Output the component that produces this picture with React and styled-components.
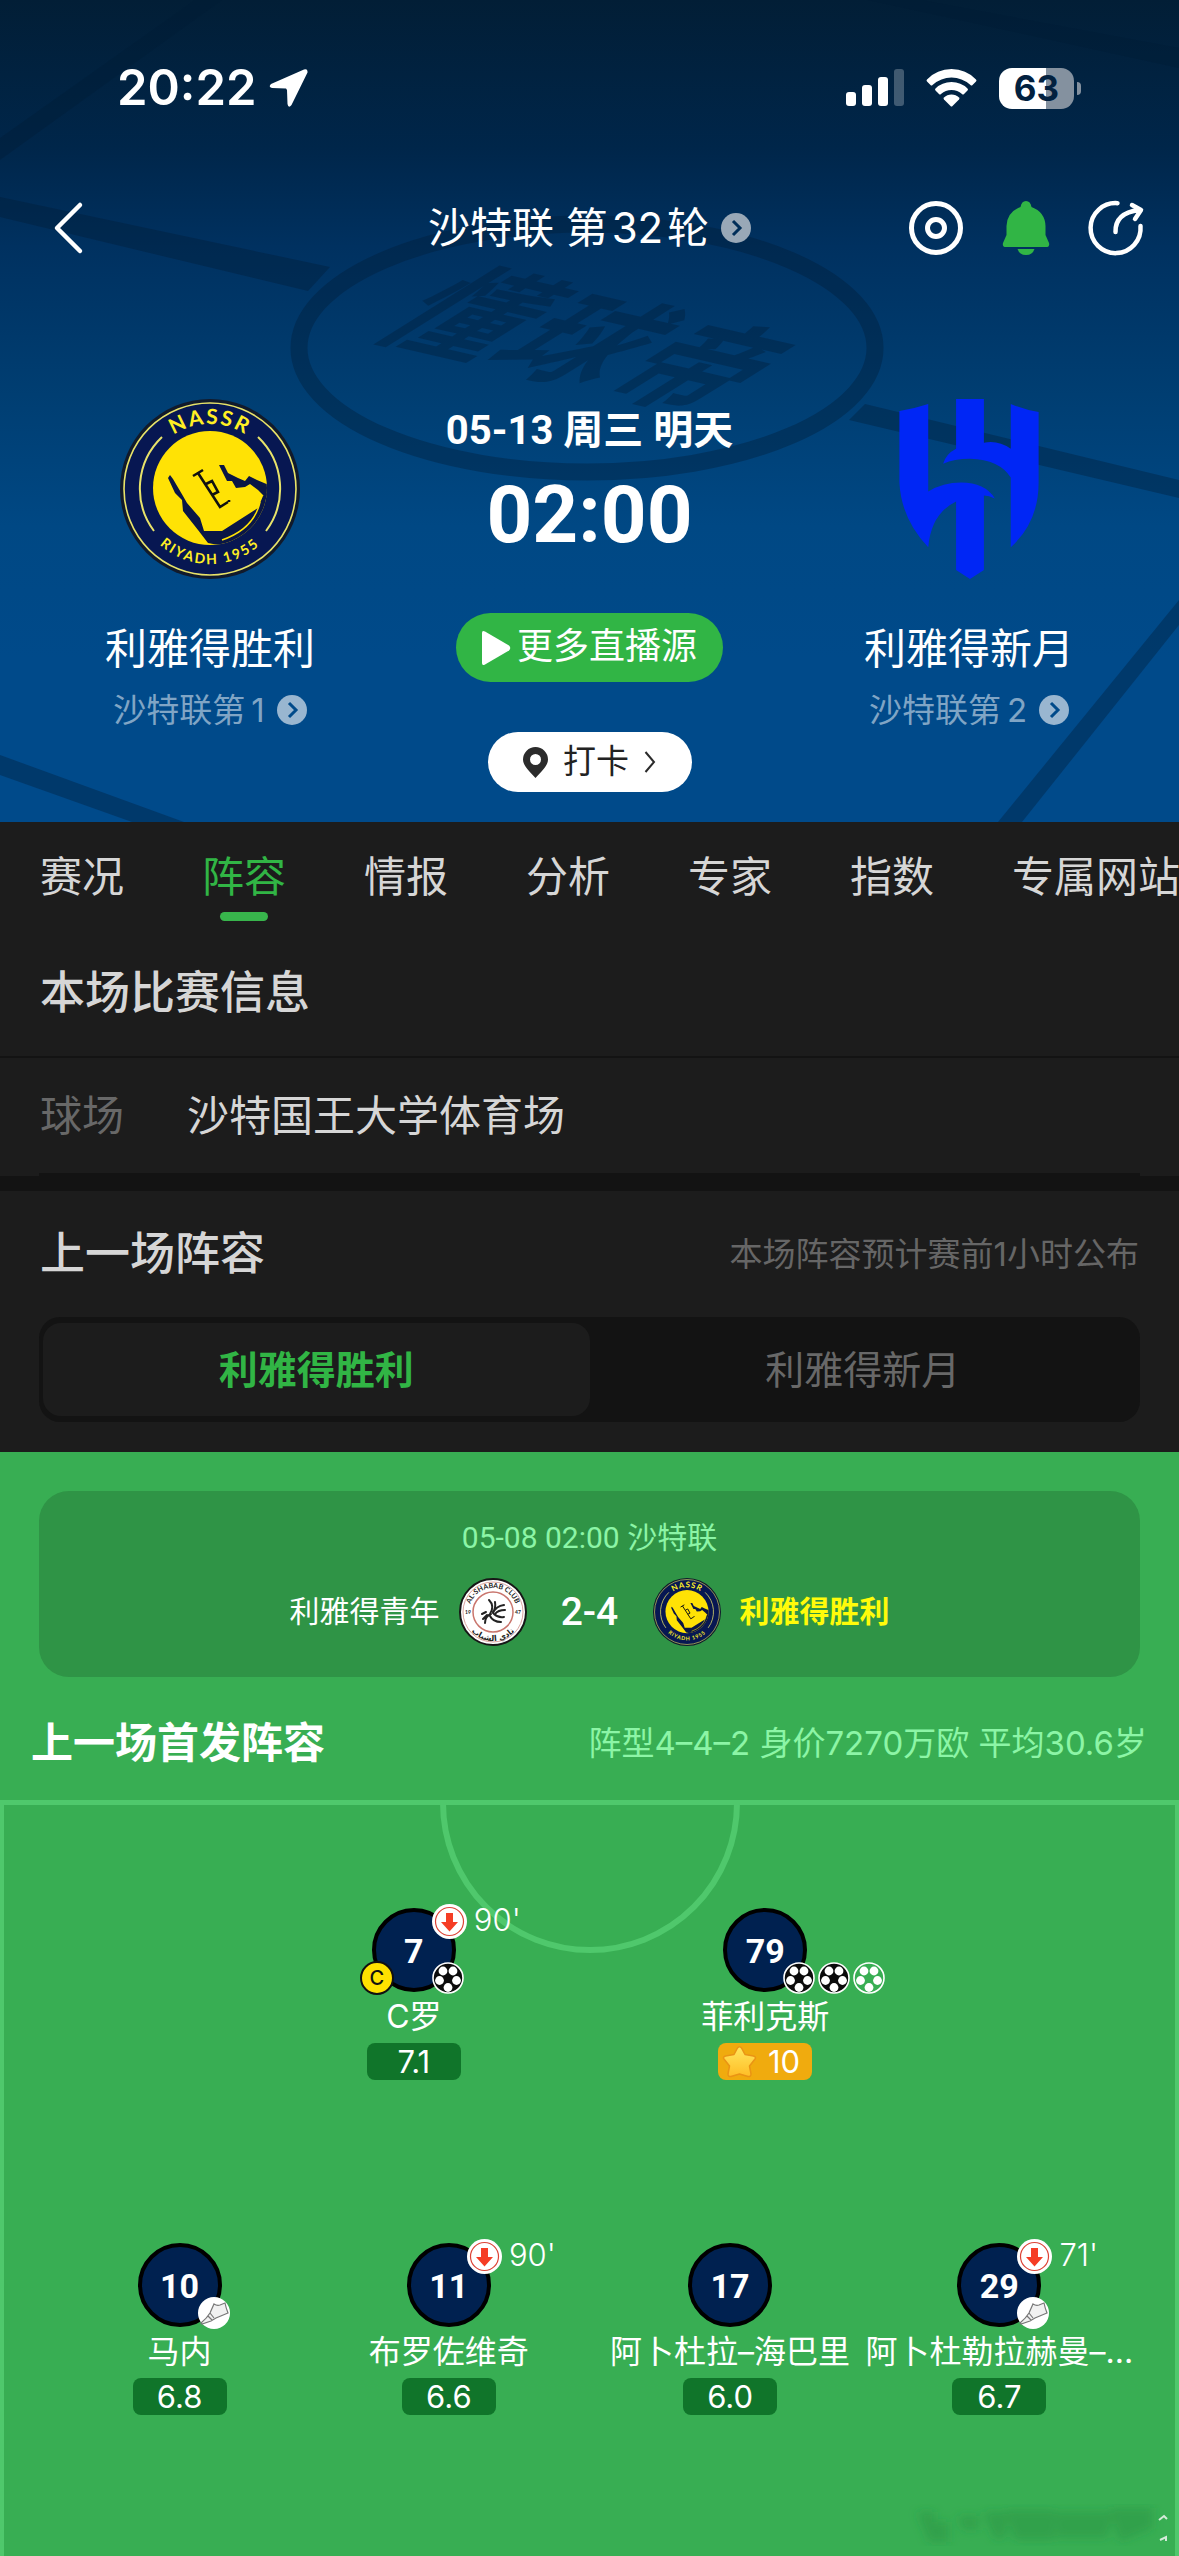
import React, { useState } from "react";
import styled, { createGlobalStyle } from "styled-components";

const GlobalStyle = createGlobalStyle`
  * {
    box-sizing: border-box;
  }
  body {
    margin: 0;
    background: #1c1c1c;
    font-family: Inter, "Noto Sans CJK SC", sans-serif;
  }
  button {
    border: 0;
    padding: 0;
    background: none;
    color: inherit;
    font: inherit;
  }
  a {
    color: inherit;
    text-decoration: none;
  }
  h1, h2, p {
    margin: 0;
    font-weight: 400;
  }
  svg {
    display: block;
    flex: none;
  }
`;

const Page = styled.div`
  display: flex;
  flex-direction: column;
  min-height: 100vh;
  overflow: hidden;
`;

/* ---------- header ---------- */

const Header = styled.header`
  position: relative;
  color: #fff;
  background: linear-gradient(#021e36 0%, #00264a 18%, #003160 30%, #003e72 48%, #004884 64%, #004a8a 80%);
`;

const Backdrop = styled.svg`
  position: absolute;
  inset: 0;
  width: 100%;
  height: 100%;
`;

const HeaderBody = styled.div`
  position: relative;
  padding-bottom: 30px;
`;

const StatusBar = styled.div`
  display: flex;
  align-items: center;
  justify-content: space-between;
  padding: 58px 105px 0 117px;
  height: 118px;
`;

const StatusGroup = styled.div`
  display: flex;
  align-items: center;
  gap: ${(p) => p.$gap}px;
`;

const Clock = styled.span`
  font-size: 49px;
  font-weight: 600;
  line-height: 60px;
`;

const Battery = styled.span`
  position: relative;
  width: 75px;
  border-radius: 13px;
  background: linear-gradient(90deg, #fff 63%, #84919f 63%);
  color: #02213f;
  font-size: 35px;
  font-weight: 700;
  line-height: 41px;
  text-align: center;

  &::after {
    content: "";
    position: absolute;
    right: -7px;
    top: 14px;
    width: 4px;
    height: 13px;
    border-radius: 0 6px 6px 0;
    background: #84919f;
  }
`;

const NavBar = styled.nav`
  display: grid;
  grid-template-columns: 1fr auto 1fr;
  align-items: center;
  height: 110px;
  margin-top: 55px;
  padding: 0 33px;
`;

const BackButton = styled.button`
  justify-self: start;
  padding-left: 19px;
`;

const League = styled.a`
  display: flex;
  align-items: center;
  gap: 12px;
  font-size: 42px;
  line-height: 60px;
`;

const NavActions = styled.div`
  display: flex;
  justify-content: flex-end;
  gap: 30px;
`;

const Match = styled.div`
  display: grid;
  grid-template-columns: 420fr 339fr 420fr;
  padding-top: 116px;
`;

const Team = styled.div`
  display: flex;
  flex-direction: column;
  align-items: center;
`;

const TeamName = styled.h2`
  margin-top: 40px;
  font-size: 42px;
  line-height: 60px;
`;

const Rank = styled.a`
  display: flex;
  align-items: center;
  gap: 12px;
  margin-top: 7px;
  font-size: 33px;
  line-height: 48px;
  color: #80a5c5;
`;

const Kickoff = styled.div`
  display: flex;
  flex-direction: column;
  align-items: center;
  font-family: Roboto, "Noto Sans CJK SC", sans-serif;
  white-space: nowrap;
`;

const KickoffDate = styled.p`
  padding-top: 2px;
  font-size: 40px;
  font-weight: 700;
  line-height: 60px;
`;

const KickoffTime = styled.p`
  margin-top: 9px;
  font-size: 80px;
  font-weight: 700;
  line-height: 90px;
`;

const LiveButton = styled.button`
  display: flex;
  align-items: center;
  justify-content: center;
  gap: 6px;
  width: 267px;
  margin-top: 53px;
  border-radius: 35px;
  background: #31b545;
  font-size: 36px;
  line-height: 69px;
`;

const CheckInButton = styled.button`
  display: flex;
  align-items: center;
  justify-content: center;
  gap: 15px;
  width: 204px;
  margin-top: 50px;
  border-radius: 30px;
  background: #fff;
  color: #222;
  font-size: 33px;
  line-height: 60px;
`;

/* ---------- dark area ---------- */

const Tabs = styled.nav`
  display: flex;
  gap: 78px;
  padding: 25px 0 0 40px;
  overflow: hidden;
`;

const Tab = styled.button`
  display: flex;
  flex: none;
  flex-direction: column;
  align-items: center;
  font-size: 42px;
  line-height: 60px;
  color: ${(p) => (p.$active ? "#31b545" : "#d6d6d6")};

  &::after {
    content: "";
    width: 48px;
    height: 9px;
    margin-top: 5px;
    border-radius: 5px;
    background: ${(p) => (p.$active ? "#38b54c" : "transparent")};
  }
`;

const SectionTitle = styled.h2`
  font-size: 45px;
  font-weight: 500;
  line-height: 60px;
  color: #d6d6d6;
`;

const InfoHead = styled.div`
  padding: 42px 40px 33px;
  border-bottom: 2px solid #131313;
`;

const InfoRow = styled.div`
  display: flex;
  gap: 63px;
  margin: 0 39px;
  padding: 28px 1px 27px;
  border-bottom: 3px solid #131313;
  font-size: 42px;
  line-height: 60px;
  color: #d6d6d6;
`;

const InfoLabel = styled.span`
  color: #686868;
`;

const Band = styled.div`
  height: 15px;
  background: #131313;
`;

const SquadHead = styled.div`
  display: flex;
  align-items: center;
  justify-content: space-between;
  padding: 33px 40px 33px;
`;

const Hint = styled.p`
  font-size: 33px;
  line-height: 48px;
  color: #666;
`;

const Segment = styled.div`
  display: grid;
  grid-template-columns: 1fr 1fr;
  margin: 0 39px 30px;
  padding: 6px 4px;
  border-radius: 21px;
  background: #131313;
`;

const SegmentButton = styled.button`
  border-radius: 18px;
  font-size: 39px;
  font-weight: ${(p) => (p.$active ? 700 : 400)};
  line-height: 93px;
  background: ${(p) => (p.$active ? "#1c1c1c" : "transparent")};
  color: ${(p) => (p.$active ? "#31b545" : "#686868")};
`;

/* ---------- green area ---------- */

const Lineup = styled.section`
  display: flex;
  flex: 1;
  flex-direction: column;
  padding-top: 39px;
  background: #38ae53;
  color: #fff;
`;

const ResultCard = styled.div`
  margin: 0 39px;
  padding: 27px 0 31px;
  border-radius: 30px;
  background: #2f9446;
  font-family: Roboto, "Noto Sans CJK SC", sans-serif;
  font-size: 30px;
  line-height: 40px;
`;

const ResultDate = styled.p`
  text-align: center;
  color: #8cf5a6;
`;

const ResultRow = styled.div`
  display: grid;
  grid-template-columns: 1fr 126px 1fr;
  align-items: center;
  margin-top: 20px;
`;

const ResultTeam = styled.span`
  display: flex;
  align-items: center;
  justify-content: ${(p) => (p.$home ? "flex-end" : "flex-start")};
  gap: 19px;
  font-weight: ${(p) => (p.$home ? 400 : 700)};
  color: ${(p) => (p.$home ? "#fff" : "#fffb0a")};
`;

const Score = styled.strong`
  font-size: 39px;
  font-weight: 500;
  text-align: center;
`;

const LineupHead = styled.div`
  display: flex;
  align-items: center;
  justify-content: space-between;
  padding: 36px 32px 27px 31px;
`;

const LineupTitle = styled.h2`
  font-size: 42px;
  font-weight: 700;
  line-height: 60px;
`;

const LineupMeta = styled.p`
  font-size: 33px;
  line-height: 48px;
  color: #8cf5a6;
`;

const Field = styled.div`
  position: relative;
  display: flex;
  flex: 1;
  flex-direction: column;
  gap: 163px;
  padding: 103px 0 90px;
  border: 4px solid #4fc86c;
  border-top-width: 5px;
  border-bottom: 0;
`;

const CentreArc = styled.svg`
  position: absolute;
  top: -2px;
  left: 50%;
  margin-left: -150px;
`;

const Smudge = styled.svg`
  position: absolute;
  right: 0;
  bottom: 0;
`;

const PlayerBox = styled.div`
  display: flex;
  flex: 1;
  flex-direction: column;
  align-items: center;
  min-width: 0;
`;

const FieldRow = styled.div`
  position: relative;
  display: flex;
  padding: 0 ${(p) => (p.$count === 2 ? "20%" : "41px")};

  ${PlayerBox}:nth-child(3) {
    margin-left: 12px;
  }
`;

const Shirt = styled.div`
  position: relative;
  width: 84px;
  height: 84px;
  border: 4px solid #000;
  border-radius: 50%;
  background: #002150;
  font-family: Roboto, sans-serif;
  font-size: 34px;
  font-weight: 700;
  line-height: 78px;
  text-align: center;
`;

const SubOff = styled.span`
  position: absolute;
  left: 56px;
  top: -8px;
  display: flex;
  gap: 7px;
  font-family: Inter, sans-serif;
  font-size: 31px;
  font-weight: 300;
  line-height: 32px;
`;

const Events = styled.span`
  position: absolute;
  left: 56px;
  top: 50px;
  display: flex;
  gap: 3px;
`;

const Captain = styled.span`
  position: absolute;
  left: -16px;
  top: 49px;
  width: 34px;
  height: 34px;
  border: 2px solid #111;
  border-radius: 50%;
  background: #ffe100;
  color: #111;
  font-family: Inter, sans-serif;
  font-size: 20px;
  font-weight: 500;
  line-height: 30px;
`;

const PlayerName = styled.span`
  margin-top: 3px;
  font-size: 32px;
  line-height: 44px;
  white-space: nowrap;
`;

const Rating = styled.span`
  display: flex;
  align-items: center;
  justify-content: ${(p) => (p.$best ? "space-between" : "center")};
  width: 94px;
  margin-top: 4px;
  padding: ${(p) => (p.$best ? "0 12px 0 4px" : "0")};
  border-radius: 8px;
  background: ${(p) => (p.$best ? "#f0ab0e" : "#10752a")};
  font-size: 31px;
  line-height: 37px;
`;

/* ---------- drawings ---------- */

function PitchBackdrop() {
  return (
    <Backdrop viewBox="0 0 1179 822" preserveAspectRatio="xMidYMid slice" aria-hidden="true">
      <g fill="#001c36" fillOpacity="0.36">
        <path d="M195 0h27L0 160v-22z" />
        <path d="M0 197l330 70-22 24L0 217z" />
        <path d="M868 0h53l258 48v20z" />
        <path d="M865 404l314 76v18L849 420z" />
        <path d="M1179 600v25L1022 822h-24z" />
        <path d="M0 755l184 67h-52L0 775z" />
        <text
          x="0 117 234"
          fontSize="112"
          fontWeight="700"
          fontFamily='"Noto Sans CJK SC", sans-serif'
          transform="translate(368 333) rotate(13) skewX(-45)"
        >
          懂球帝
        </text>
      </g>
      <ellipse cx="587" cy="348" rx="288" ry="124" fill="none" stroke="#001c36" strokeOpacity="0.36" strokeWidth="17" />
    </Backdrop>
  );
}

function MoreDot({ color, arrow }) {
  return (
    <svg width="30" height="30" viewBox="0 0 30 30">
      <circle cx="15" cy="15" r="15" fill={color} />
      <path d="M12 8l7 7-7 7" fill="none" stroke={arrow} strokeWidth="3" />
    </svg>
  );
}

function NassrCrest({ size }) {
  return (
    <svg width={size} height={size} viewBox="0 0 180 180">
      <defs>
        <path id="nassrTop" d="M25 90a65 65 0 0 1 130 0" />
        <path id="nassrBottom" d="M15 90a75 75 0 0 0 150 0" />
        <clipPath id="nassrDisc">
          <circle cx="90" cy="89" r="57" />
        </clipPath>
      </defs>
      <circle cx="90" cy="90" r="90" fill="#111a2b" />
      <circle cx="90" cy="90" r="86" fill="#071752" stroke="#e8e36a" strokeWidth="1.6" />
      <path d="M42 38A71 71 0 0 0 34 132M138 38a71 71 0 0 1 8 94" fill="none" stroke="#e8e36a" strokeWidth="2" />
      <circle cx="90" cy="89" r="57" fill="#ffe205" />
      <g clipPath="url(#nassrDisc)" fill="#0a1645">
        <path d="M50 76l3 4 10 17 4 7 13 15 4 13 18 0 36-23 5-12 8-6v30l-25 22q-16 6-38 1l-10-13-15-19-1-11-7-7-7-15z" />
        <path d="M99 66h5l4 8 10 5 7 3 4-5 8 4 12 5v12l-5-1-6-6-8-6-5 3-9 1-4-7h-5l-5-10z" />
        <path d="M140 103q-6 27-38 38" fill="none" stroke="#ffe205" strokeWidth="1.5" />
      </g>
      <path d="M73 77l10-6M78 74l22 34 8-5M86 85l6-3 6 11-6 3M109 101v2" fill="none" stroke="#111" strokeWidth="2.6" />
      <g fill="#ffef24" fontFamily="Lato, sans-serif" textAnchor="middle">
        <text fontSize="21" fontWeight="700" letterSpacing="2">
          <textPath href="#nassrTop" startOffset="50%">NASSR</textPath>
        </text>
        <text fontSize="14" fontWeight="700" letterSpacing="2">
          <textPath href="#nassrBottom" startOffset="50%">RIYADH 1955</textPath>
        </text>
      </g>
    </svg>
  );
}

function HilalCrest() {
  return (
    <svg width="140" height="180" viewBox="0 0 140 181" fill="#0026f5">
      <path d="M0 12Q14 10 29 5v88Q44 84 62 84q24 0 34 16-6-3-11-3v75l-14 9-14-9v-69q-25 12-28 46Q2 121 0 84z" />
      <path d="M57 0h28v44q14-3 27 6V5q14 6 28 8v71q0 40-28 65V79Q101 61 71 60q-16 0-27 5 3-10 13-15z" />
    </svg>
  );
}

function ShababCrest() {
  return (
    <svg width="68" height="68" viewBox="0 0 68 68">
      <defs>
        <path id="shababTop" d="M10 34a24 24 0 0 1 48 0" />
        <path id="shababBottom" d="M5 34a29 29 0 0 0 58 0" />
      </defs>
      <circle cx="34" cy="34" r="33" fill="#fff" stroke="#171717" strokeWidth="2" />
      <circle cx="34" cy="34" r="30" fill="none" stroke="#d9a5a0" />
      <circle cx="34" cy="34" r="20" fill="none" stroke="#c9756d" strokeWidth="1.5" />
      <g fill="none" stroke="#222" strokeWidth="2" strokeLinecap="round">
        <path d="M30 22q6 6 1 14M36 24q1 6-2 10M45 27q-8 1-11 8M46 32q-7 0-10 4M45 39q-6 1-10-3M42 44q-8 0-11-6M26 45q0-7 6-9M23 36l4-2M24 41l4-4" />
      </g>
      <g fill="#222" fontFamily="Lato, sans-serif" fontWeight="700" textAnchor="middle">
        <text fontSize="7">
          <textPath href="#shababTop" startOffset="50%">AL-SHABAB CLUB</textPath>
        </text>
        <text fontSize="8" fontFamily='"DejaVu Sans", sans-serif'>
          <textPath href="#shababBottom" startOffset="50%">نادي الشباب</textPath>
        </text>
        <text x="9" y="36" fontSize="5">19</text>
        <text x="59" y="36" fontSize="5">47</text>
      </g>
    </svg>
  );
}

function Ball({ penalty }) {
  return (
    <svg width="32" height="32" viewBox="0 0 32 32">
      <circle cx="16" cy="16" r="15" fill={penalty ? "#38ae53" : "#0b0b0b"} stroke="#fff" strokeWidth="1.6" />
      <g fill="#fff">
        <circle cx="11" cy="9" r="4.4" />
        <circle cx="21" cy="9" r="4.4" />
        <circle cx="7.5" cy="18.5" r="4.4" />
        <circle cx="24.5" cy="18.5" r="4.4" />
        <circle cx="16" cy="25.5" r="4.4" />
      </g>
    </svg>
  );
}

function Boot() {
  return (
    <svg width="32" height="32" viewBox="0 0 32 32">
      <circle cx="16" cy="16" r="16" fill="#fff" />
      <path
        d="M3 26Q9 21 12 16l4-9q3 2 6 1l5-2q1 5 3 10l-12 5-5 3-9 3zM10 19l4 4M12 16l4 5"
        fill="#f1f1f1"
        stroke="#777"
        strokeWidth="1.2"
      />
    </svg>
  );
}

function SubArrow() {
  return (
    <svg width="35" height="35" viewBox="0 0 35 35">
      <circle cx="17.5" cy="17.5" r="17.5" fill="#fff" />
      <circle cx="17.5" cy="17.5" r="14" fill="none" stroke="#dc4336" strokeWidth="1.2" />
      <path d="M14 9h7v9h5l-8.5 9.5L9 18h5z" fill="#f53d25" />
    </svg>
  );
}

function Star() {
  return (
    <svg width="35" height="33" viewBox="0 0 35 33">
      <defs>
        <linearGradient id="star" x1="0" y1="0" x2="0" y2="1">
          <stop offset="0" stopColor="#ffe75e" />
          <stop offset="1" stopColor="#ffbd25" />
        </linearGradient>
      </defs>
      <path
        d="M15.5 3q2-2.500 4 0l3.500 6.500 8.500 1.500q3 1 1.500 3l-5.500 7 1.500 8q0 3-3 2.500l-8.500-2.500-8.500 2.500q-3 .5-3-2.500l1.500-8-5.500-7Q.5 12 3.500 11l8.500-1.500z"
        fill="url(#star)"
        stroke="#ea9414"
        strokeWidth="1.500"
        strokeLinejoin="round"
      />
    </svg>
  );
}

function Player({ player }) {
  return (
    <PlayerBox>
      <Shirt>
        {player.number}
        {player.off && (
          <SubOff>
            <SubArrow />
            {player.off}
          </SubOff>
        )}
        {player.captain && <Captain>C</Captain>}
        <Events>
          {player.events.map((e, i) =>
            e === "boot" ? <Boot key={i} /> : <Ball key={i} penalty={e === "penalty"} />
          )}
        </Events>
      </Shirt>
      <PlayerName>{player.name}</PlayerName>
      <Rating $best={player.best}>
        {player.best && <Star />}
        {player.rating}
      </Rating>
    </PlayerBox>
  );
}

const tabs = ["赛况", "阵容", "情报", "分析", "专家", "指数", "专属网站"];

const teams = ["利雅得胜利", "利雅得新月"];

const rows = [
  [
    { number: 7, name: "C罗", rating: "7.1", off: "90'", captain: true, events: ["goal"] },
    { number: 79, name: "菲利克斯", rating: "10", best: true, events: ["goal", "goal", "penalty"] },
  ],
  [
    { number: 10, name: "马内", rating: "6.8", events: ["boot"] },
    { number: 11, name: "布罗佐维奇", rating: "6.6", off: "90'", events: [] },
    { number: 17, name: "阿卜杜拉–海巴里", rating: "6.0", events: [] },
    { number: 29, name: "阿卜杜勒拉赫曼–...", rating: "6.7", off: "71'", events: ["boot"] },
  ],
];

export default function App() {
  const [tab, setTab] = useState("阵容");
  const [team, setTeam] = useState(teams[0]);

  return (
    <Page>
      <GlobalStyle />
      <Header>
        <PitchBackdrop />
        <HeaderBody>
          <StatusBar>
            <StatusGroup $gap={12}>
              <Clock>20:22</Clock>
              <svg width="40" height="40" viewBox="0 0 40 40" fill="#fff">
                <path d="M35 1.500q4-1 3.500 3L22.500 37q-3 4-4-1l-.5-14-1-1.500-14-.5q-4-1-1-4z" />
              </svg>
            </StatusGroup>
            <StatusGroup $gap={22}>
              <svg width="58" height="38" viewBox="0 0 58 38" fill="#fff">
                <rect x="0" y="23" width="10" height="14" rx="3" />
                <rect x="16" y="16" width="10" height="21" rx="3" />
                <rect x="32" y="8" width="10" height="29" rx="3" />
                <rect x="48" y="0" width="10" height="37" rx="3" opacity="0.25" />
              </svg>
              <svg width="51" height="38" viewBox="0 0 51 38" fill="#fff">
                <path d="M1 10.500Q11 0 25.500 0T50 10.500q1 1 0 2l-3.500 3.500q-1 1-2 0Q36 8.500 25.500 8.500T6.500 16q-1 1-2 0L1 12.500q-1-1 0-2z" />
                <path d="M9.500 19.500Q16 13 25.500 13t16 6.500q1 1 0 2L38 25q-1 1-2 0-4.500-4-10.500-4T15 25q-1 1-2 0l-3.500-3.500q-1-1 0-2z" />
                <path d="M18 28.500q3-3 7.500-3t7.500 3q1 1 0 2l-6.500 6.500q-1 1-2 0L18 30.500q-1-1 0-2z" />
              </svg>
              <Battery>63</Battery>
            </StatusGroup>
          </StatusBar>

          <NavBar>
            <BackButton aria-label="返回">
              <svg width="32" height="54" viewBox="0 0 32 54">
                <path d="M28 4L5 27l23 23" fill="none" stroke="#fff" strokeWidth="4.500" strokeLinecap="round" strokeLinejoin="round" />
              </svg>
            </BackButton>
            <League href="#league">
              沙特联 第{"\u200A"}32{"\u200A"}轮
              <MoreDot color="#99a8b7" arrow="#002e59" />
            </League>
            <NavActions>
              <button aria-label="关注">
                <svg width="60" height="60" viewBox="0 0 60 60" fill="none" stroke="#fff">
                  <circle cx="30" cy="30" r="24.500" strokeWidth="5" />
                  <circle cx="30" cy="30" r="8.500" strokeWidth="5" />
                </svg>
              </button>
              <button aria-label="提醒">
                <svg width="60" height="60" viewBox="0 0 60 60" fill="#31b545">
                  <path d="M30 3q4.500 0 5.500 6Q49 14 49.500 28v9l3.500 8q1 4-3 4H10q-4 0-3-4l3.500-8v-9Q11 14 24.500 9q1-6 5.500-6z" />
                  <path d="M21.500 51h17q-2 6-8.500 6t-8.500-6z" />
                </svg>
              </button>
              <button aria-label="分享">
                <svg width="60" height="60" viewBox="0 0 60 60" fill="none" stroke="#fff" strokeWidth="4.500" strokeLinecap="round" strokeLinejoin="round">
                  <path d="M31.500 5.200A25 25 0 1 0 54.500 28" />
                  <path d="M29.500 34Q29 15 53 12M46 7l9 5-6 9" />
                </svg>
              </button>
            </NavActions>
          </NavBar>

          <Match>
            <Team>
              <NassrCrest size={180} />
              <TeamName>利雅得胜利</TeamName>
              <Rank href="#rank">
                沙特联第{"\u2009"}1
                <MoreDot color="#99b6d0" arrow="#004a8a" />
              </Rank>
            </Team>
            <Kickoff>
              <KickoffDate>05-13 周三 明天</KickoffDate>
              <KickoffTime>02:00</KickoffTime>
              <LiveButton>
                <svg width="29" height="34" viewBox="0 0 29 34" fill="#fff">
                  <path d="M0 2q0-3 3-1.500l24 14q2.500 2.500 0 5l-24 14Q0 35 0 32z" />
                </svg>
                更多直播源
              </LiveButton>
              <CheckInButton>
                <svg width="25" height="31" viewBox="0 0 25 31">
                  <path d="M12.500 0A12.500 12.500 0 0 1 25 12.500C25 19 18 25 12.500 31 7 25 0 19 0 12.500A12.500 12.500 0 0 1 12.500 0zm0 7a5.500 5.500 0 1 0 0 11 5.500 5.500 0 0 0 0-11z" fill="#2b2b2b" />
                </svg>
                打卡
                <svg width="12" height="24" viewBox="0 0 12 24">
                  <path d="M1.500 2l8.500 10-8.500 10" fill="none" stroke="#2b2b2b" strokeWidth="2" />
                </svg>
              </CheckInButton>
            </Kickoff>
            <Team>
              <HilalCrest />
              <TeamName>利雅得新月</TeamName>
              <Rank href="#rank">
                沙特联第{"\u2009"}2
                <MoreDot color="#99b6d0" arrow="#004a8a" />
              </Rank>
            </Team>
          </Match>
        </HeaderBody>
      </Header>

      <Tabs>
        {tabs.map((t) => (
          <Tab key={t} $active={t === tab} onClick={() => setTab(t)}>
            {t}
          </Tab>
        ))}
      </Tabs>

      <InfoHead>
        <SectionTitle>本场比赛信息</SectionTitle>
      </InfoHead>
      <InfoRow>
        <InfoLabel>球场</InfoLabel>
        <span>沙特国王大学体育场</span>
      </InfoRow>
      <Band />

      <SquadHead>
        <SectionTitle>上一场阵容</SectionTitle>
        <Hint>本场阵容预计赛前1小时公布</Hint>
      </SquadHead>
      <Segment>
        {teams.map((t) => (
          <SegmentButton key={t} $active={t === team} onClick={() => setTeam(t)}>
            {t}
          </SegmentButton>
        ))}
      </Segment>

      <Lineup>
        <ResultCard>
          <ResultDate>05-08 02:00 沙特联</ResultDate>
          <ResultRow>
            <ResultTeam $home>
              利雅得青年
              <ShababCrest />
            </ResultTeam>
            <Score>2-4</Score>
            <ResultTeam>
              <NassrCrest size={68} />
              利雅得胜利
            </ResultTeam>
          </ResultRow>
        </ResultCard>

        <LineupHead>
          <LineupTitle>上一场首发阵容</LineupTitle>
          <LineupMeta>阵型4–4–2 身价7270万欧 平均30.6岁</LineupMeta>
        </LineupHead>

        <Field>
          <CentreArc width="300" height="152" viewBox="0 0 300 152">
            <path d="M3 0a147 147 0 0 0 294 0" fill="none" stroke="#4fc86c" strokeWidth="6" />
          </CentreArc>
          {rows.map((row, i) => (
            <FieldRow key={i} $count={row.length}>
              {row.map((p) => (
                <Player key={p.number} player={p} />
              ))}
            </FieldRow>
          ))}
          <Smudge width="270" height="56" viewBox="0 0 270 56" aria-hidden="true">
            <defs>
              <filter id="soft">
                <feGaussianBlur stdDeviation="5" />
              </filter>
            </defs>
            <g filter="url(#soft)" fill="#2a8b42" fillOpacity="0.4">
              <path d="M12 12h18v10h14v20H24zM52 16h22v14h-16zM78 12h24v24l-12 4zM100 10h50v30h-40zM150 12h60l-8 26h-50zM206 8h42v20l-34 14z" />
            </g>
            <path d="M254 20l5-4 3 3M255 40l6-3v4" fill="none" stroke="#d5ead9" strokeWidth="2" />
          </Smudge>
        </Field>
      </Lineup>
    </Page>
  );
}
